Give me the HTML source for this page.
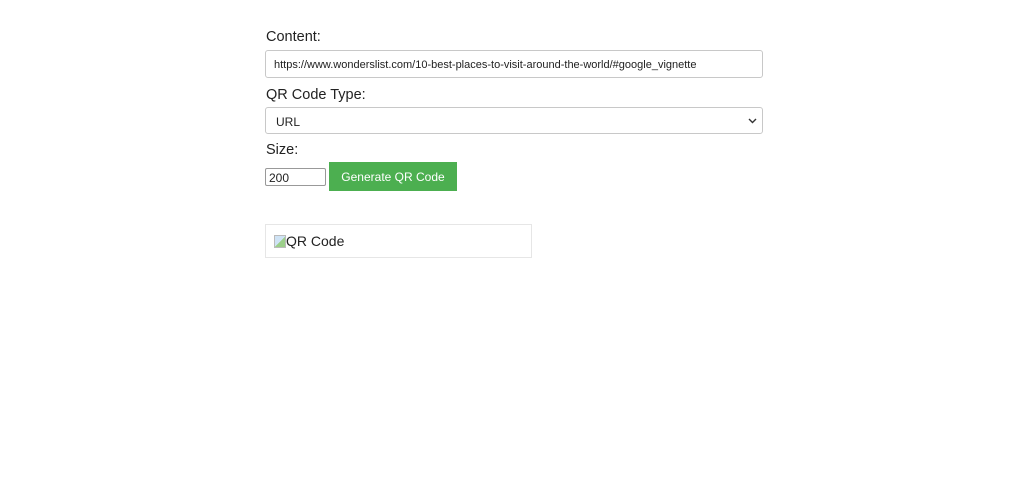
<!DOCTYPE html>
<html><head><style>
body{margin:0;background:#fff;font-family:"Liberation Sans",Arial,sans-serif;color:#222;}
.a{position:absolute;}
.lbl{font-size:14.5px;color:#222;}
.box{border:1px solid #c8c8c8;border-radius:3px;box-sizing:border-box;background:#fff;font-size:12px;color:#222;}
</style></head><body>
<div class="a lbl" style="left:266px;top:29px">Content:</div>
<div class="a box" style="left:265px;top:50px;width:498px;height:28px;padding:8px 0 0 8px;font-size:11px">https://www.wonderslist.com/10-best-places-to-visit-around-the-world/#google_vignette</div>
<div class="a lbl" style="left:266px;top:87px">QR Code Type:</div>
<div class="a box" style="left:265px;top:107px;width:498px;height:27px;padding:7px 0 0 10px">URL
<svg class="a" style="right:5px;top:10px" width="9" height="6" viewBox="0 0 9 6"><path d="M1 1l3.5 3.5L8 1" fill="none" stroke="#333" stroke-width="1.4"/></svg></div>
<div class="a lbl" style="left:266px;top:142px">Size:</div>
<div class="a box" style="left:265px;top:168px;width:61px;height:18px;padding:2px 0 0 3px;border-color:#999;border-radius:2px">200</div>
<div class="a" style="left:329px;top:162px;width:128px;height:29px;background:#4caf50;color:#fff;font-size:12px;text-align:center;line-height:31px">Generate QR Code</div>
<div class="a" style="left:265px;top:224px;width:267px;height:34px;border:1px solid #e6e6e6;box-sizing:border-box"></div>
<div class="a" style="left:274px;top:233px;font-size:14px;color:#222"><span style="display:inline-block;width:12px;height:13px;border:1px solid #bbb;box-sizing:border-box;vertical-align:-2px;background:linear-gradient(135deg,#cfe3f5 50%,#9ccf8a 50%)"></span>QR Code</div>
</body></html>
